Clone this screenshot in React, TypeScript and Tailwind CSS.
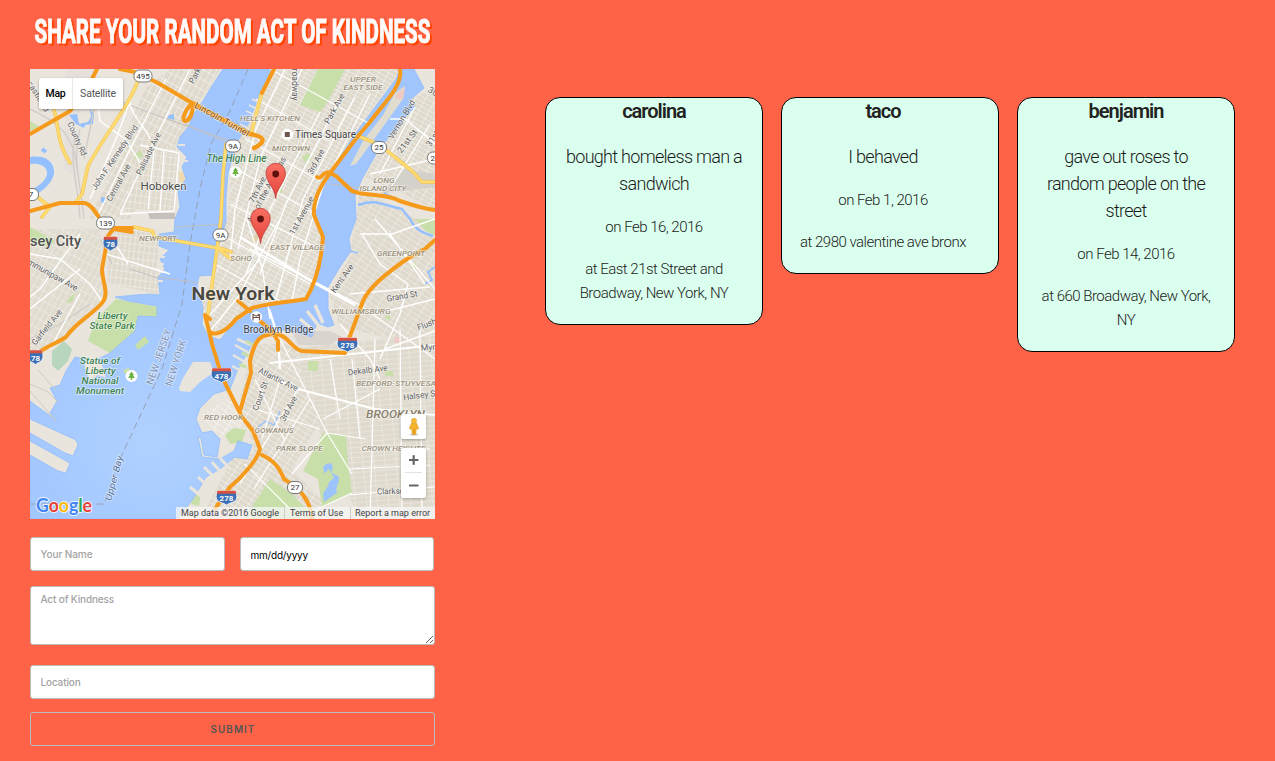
import React from "react";

type Kindness = { name: string; act: string; date: string; place: string };

const acts: Kindness[] = [
  { name: "carolina", act: "bought homeless man a sandwich", date: "on Feb 16, 2016", place: "at East 21st Street and Broadway, New York, NY" },
  { name: "taco", act: "I behaved", date: "on Feb 1, 2016", place: "at 2980 valentine ave bronx" },
  { name: "benjamin", act: "gave out roses to random people on the street", date: "on Feb 14, 2016", place: "at 660 Broadway, New York, NY" },
];

type Label = { t: string; x: number; y: number; s: number; w?: number; r?: number; c?: string; i?: boolean; len?: number };

const AREA = "#9b917c";
const ROAD = "#606060";
const PARK = "#3f8452";

const labels: Label[] = [
  { t: "UPPER", x: 333, y: 13, s: 8, c: AREA, i: true, w: 500, len: 26 },
  { t: "EAST SIDE", x: 333, y: 21, s: 8, c: AREA, i: true, w: 500, len: 39 },
  { t: "HELL'S KITCHEN", x: 240, y: 51.5, s: 8, c: AREA, i: true, w: 500, len: 60 },
  { t: "MIDTOWN", x: 261, y: 82, s: 8, c: AREA, i: true, w: 500, len: 38 },
  { t: "LONG", x: 354, y: 114, s: 8, c: AREA, i: true, w: 500, len: 21 },
  { t: "ISLAND CITY", x: 353, y: 122, s: 8, c: AREA, i: true, w: 500, len: 47 },
  { t: "NEWPORT", x: 128, y: 171.5, s: 8, c: AREA, i: true, w: 500, len: 38 },
  { t: "SOHO", x: 211, y: 191.5, s: 8, c: AREA, i: true, w: 500, len: 22 },
  { t: "EAST VILLAGE", x: 267, y: 181, s: 8, c: AREA, i: true, w: 500, len: 54 },
  { t: "GREENPOINT", x: 371, y: 187, s: 8, c: AREA, i: true, w: 500, len: 48 },
  { t: "WILLIAMSBURG", x: 331, y: 244.5, s: 8, c: AREA, i: true, w: 500, len: 59 },
  { t: "BEDFORD-STUYVESA", x: 366, y: 316.5, s: 8, c: AREA, i: true, w: 500, len: 80 },
  { t: "RED HOOK", x: 193.5, y: 350.5, s: 8, c: AREA, i: true, w: 500, len: 39 },
  { t: "GOWANUS", x: 244, y: 364, s: 8, c: AREA, i: true, w: 500, len: 39 },
  { t: "PARK SLOPE", x: 269.5, y: 382, s: 8, c: AREA, i: true, w: 500, len: 47 },
  { t: "CROWN HEIGHTS", x: 363.5, y: 382, s: 8, c: AREA, i: true, w: 500, len: 64 },
  { t: "BROOKLYN", x: 365.5, y: 349, s: 11, c: "#8a806c", i: true, w: 500, len: 59 },
  { t: "New York", x: 203, y: 231, s: 18, w: 600, c: "#4a4640", len: 83 },
  { t: "sey City", x: 25.5, y: 176.5, s: 14, w: 500, c: "#505050", len: 51 },
  { t: "Hoboken", x: 133.5, y: 121, s: 11.5, w: 400, c: "#4c4c4c", len: 46 },
  { t: "Times Square", x: 295.5, y: 68.5, s: 10.5, w: 400, c: "#444", len: 61 },
  { t: "Brooklyn Bridge", x: 248.5, y: 264, s: 10.5, w: 400, c: "#3c3c3c", len: 70 },
  { t: "The High Line", x: 206.5, y: 93, s: 10, c: PARK, i: true, w: 500, len: 60 },
  { t: "Liberty", x: 82.5, y: 250, s: 9.8, c: PARK, i: true, w: 500, len: 30 },
  { t: "State Park", x: 82, y: 260, s: 9.8, c: PARK, i: true, w: 500, len: 45 },
  { t: "Statue of", x: 70, y: 295, s: 9.8, c: PARK, i: true, w: 500, len: 40 },
  { t: "Liberty", x: 70.5, y: 305, s: 9.8, c: PARK, i: true, w: 500, len: 30 },
  { t: "National", x: 70, y: 315, s: 9.8, c: PARK, i: true, w: 500, len: 37 },
  { t: "Monument", x: 70, y: 325, s: 9.8, c: PARK, i: true, w: 500, len: 48 },
  { t: "County Rd", x: 44.5, y: 71, s: 8.5, r: 66, c: ROAD, len: 36 },
  { t: "castle Rd", x: 6, y: 29, s: 8.5, r: 58, c: ROAD, len: 34 },
  { t: "John F. Kennedy Blvd", x: 87, y: 90, s: 8.5, r: -56, c: ROAD, len: 76 },
  { t: "Central Ave", x: 91, y: 115, s: 8.5, r: -61, c: ROAD, len: 41 },
  { t: "Palisade Ave", x: 121, y: 86, s: 8.5, r: -64, c: ROAD, len: 46 },
  { t: "Park Ave", x: 171, y: 1, s: 8.5, r: -62, c: ROAD, len: 32 },
  { t: "Lincoln Tunnel", x: 190.5, y: 53, s: 9, r: 29, c: "#87500d", w: 400, len: 61 },
  { t: "Broadway", x: 261.5, y: 13, s: 8.5, r: 90, c: ROAD, len: 37 },
  { t: "Park Ave", x: 307, y: 41, s: 8.5, r: -61, c: ROAD, len: 33 },
  { t: "3rd Ave", x: 288.5, y: 94, s: 8.5, r: -62, c: ROAD, len: 27 },
  { t: "7th Ave", x: 230, y: 122, s: 8.5, r: -64, c: ROAD, len: 28 },
  { t: "Ave of the Americas", x: 239, y: 122, s: 8.5, r: -62, c: ROAD, len: 73 },
  { t: "1st Avenue", x: 274, y: 148, s: 8.5, r: -61, c: ROAD, len: 42 },
  { t: "Vernon Blvd", x: 374, y: 52, s: 8.5, r: -59, c: ROAD, len: 44 },
  { t: "21st St", x: 379.5, y: 74, s: 8.5, r: -52, c: ROAD, len: 27 },
  { t: "30th", x: 405, y: 27, s: 8.5, r: 32, c: ROAD, len: 18 },
  { t: "31st", x: 405, y: 71, s: 8.5, r: -58, c: ROAD, len: 17 },
  { t: "Communipaw Ave", x: 17, y: 206, s: 8.5, r: 29, c: ROAD, len: 66 },
  { t: "Garfield Ave", x: 19, y: 260, s: 8.5, r: -51, c: ROAD, len: 43 },
  { t: "Kent Ave", x: 314.5, y: 211, s: 8.5, r: -55, c: ROAD, len: 33 },
  { t: "Grand St", x: 372.5, y: 230, s: 8.5, r: -10, c: ROAD, len: 31 },
  { t: "Flushing", x: 403, y: 256, s: 8.5, r: -21, c: ROAD, len: 31 },
  { t: "Myrtle", x: 403, y: 281, s: 8.5, r: -4, c: ROAD, len: 24 },
  { t: "Dekalb Ave", x: 338, y: 304, s: 8.5, r: -7, c: ROAD, len: 40 },
  { t: "Halsey St", x: 391, y: 329, s: 8.5, r: -8, c: ROAD, len: 35 },
  { t: "Atlantic Ave", x: 247, y: 313, s: 8.5, r: 26, c: ROAD, len: 43 },
  { t: "Court St", x: 233, y: 328, s: 8.5, r: -70, c: ROAD, len: 30 },
  { t: "3rd Ave", x: 261, y: 341, s: 8.5, r: -62, c: ROAD, len: 27 },
  { t: "Clarkson", x: 363, y: 425, s: 8.5, r: -2, c: ROAD, len: 32 },
  { t: "Upper Bay", x: 87, y: 410, s: 9, r: -75, c: "#56749c", i: true, len: 46 },
  { t: "NEW JERSEY", x: 132, y: 289, s: 10, r: -71, c: "#8195b5", len: 58 },
  { t: "NEW YORK", x: 149, y: 295, s: 10, r: -72, c: "#8195b5", len: 48 },
];

function MapLabel({ l }: { l: Label }) {
  return (
    <text
      transform={`translate(${l.x} ${l.y}) rotate(${l.r ?? 0})`}
      fontSize={l.s}
      fontWeight={l.w ?? 400}
      fontStyle={l.i ? "italic" : "normal"}
      fill={l.c}
      stroke="#ffffff"
      strokeOpacity=".55"
      strokeWidth="1.6"
      strokeLinejoin="round"
      paintOrder="stroke"
      textAnchor="middle"
      textLength={l.len}
      lengthAdjust="spacingAndGlyphs"
    >
      {l.t}
    </text>
  );
}

function Shield({ x, y, n }: { x: number; y: number; n: string }) {
  const wide = n.length > 2;
  return (
    <g transform={`translate(${x} ${y})`}>
      <g transform={wide ? "scale(1.400 1)" : "scale(1 1)"}>
        <path d="M-6.500-6.500H6.500C8-1 8 3 4 5 2 6 1 6.500 0 7.500-1 6.500-2 6-4 5-8 3-8-1-6.500-6.500z" fill="#3a6fb5" stroke="#fff" strokeWidth=".7" />
        <path d="M-6.500-6.800H6.500L7-3.800H-7z" fill="#d8503f" />
      </g>
      <text y="3.700" fontSize="8" fontWeight="700" fill="#fff" textAnchor="middle">{n}</text>
    </g>
  );
}

function Route({ x, y, n }: { x: number; y: number; n: string }) {
  const w = n.length > 2 ? 18 : 15;
  return (
    <g transform={`translate(${x} ${y})`}>
      <rect x={-w / 2} y="-6" width={w} height="12" rx="5.5" fill="#fff" stroke="#777" strokeWidth="1" />
      <text y="2.9" fontSize="8" fontWeight="400" fill="#333" textAnchor="middle">{n}</text>
    </g>
  );
}

function Pin({ x, y }: { x: number; y: number }) {
  return (
    <g transform={`translate(${x} ${y})`}>
      <path d="M0 0C-.8-11-9.700-16-9.700-25.500A9.700 9.700 0 0 1 9.700-25.500C9.700-16 .8-11 0 0z" transform="translate(0 -1)" fill="url(#pin)" stroke="#c03a31" strokeWidth=".8" />
      <circle cy="-25.500" r="3.400" fill="#5e1210" />
    </g>
  );
}

function TreeBadge({ x, y }: { x: number; y: number }) {
  return (
    <g transform={`translate(${x} ${y})`}>
      <circle r="6" fill="#fff" />
      <path d="M0-4.500L2.500-1H1.500L3.300 2H.7V4H-.7V2H-3.300L-1.500-1H-2.500z" fill="#6ab344" />
    </g>
  );
}

const MANHATTAN = "M243 0H372L345 35 300 100 283 140 294 170 283 222 225 240 178 268 172 235 185 200 197 150 205 75z";

function CityMap() {
  return (
    <svg width="405" height="450" viewBox="0 0 405 450" className="block" fontFamily="Roboto, sans-serif">
      <defs>
        <radialGradient id="bay" gradientUnits="userSpaceOnUse" cx="120" cy="370" r="160">
          <stop offset="0" stopColor="#b0d1ff" />
          <stop offset="1" stopColor="#a0c5ff" />
        </radialGradient>
        <linearGradient id="pin" x1="0" y1="0" x2="0" y2="1">
          <stop offset="0" stopColor="#fb7064" />
          <stop offset="1" stopColor="#e2443b" />
        </linearGradient>
        <pattern id="gridNY" width="9" height="4.500" patternUnits="userSpaceOnUse" patternTransform="rotate(29)">
          <path d="M0 0H9M0 0V4.500" stroke="#fff" strokeWidth=".8" />
        </pattern>
        <pattern id="gridJC" width="5.500" height="9" patternUnits="userSpaceOnUse" patternTransform="rotate(28)">
          <path d="M0 0H5.500M0 0V9" stroke="#fff" strokeWidth=".8" />
        </pattern>
        <pattern id="gridH" width="5" height="7" patternUnits="userSpaceOnUse" patternTransform="rotate(7)">
          <path d="M0 0H5M0 0V7" stroke="#fff" strokeWidth=".7" />
        </pattern>
        <pattern id="gridBK" width="11" height="5" patternUnits="userSpaceOnUse" patternTransform="rotate(-5)">
          <path d="M0 0H11M0 0V5" stroke="#fff" strokeWidth=".7" />
        </pattern>
        <pattern id="gridPS" width="10" height="5" patternUnits="userSpaceOnUse" patternTransform="rotate(33)">
          <path d="M0 0H10M0 0V5" stroke="#fff" strokeWidth=".8" />
        </pattern>
      </defs>

      <rect width="405" height="450" fill="#e9e5dc" />

      {/* city blocks */}
      <g>
        <path d={MANHATTAN} fill="#dfdacd" />
        <path d={MANHATTAN} fill="url(#gridNY)" />
        <path d="M115 20L140 0H190L150 68 100 150H60z" fill="#dfdacd" />
        <path d="M115 20L140 0H190L150 68 100 150H60z" fill="url(#gridJC)" />
        <path d="M110 70L150 80 145 142 95 140z" fill="#dfdacd" />
        <path d="M110 70L150 80 145 142 95 140z" fill="url(#gridH)" />
        <path d="M78 158L128 162 128 225 78 215z" fill="#dfdacd" />
        <path d="M78 158L128 162 128 225 78 215z" fill="url(#gridH)" />
        <path d="M0 160L70 160 74 230 30 275 0 285z" fill="#e1dcd0" />
        <path d="M0 160L70 160 74 230 30 275 0 285z" fill="url(#gridJC)" opacity=".75" />
        <path d="M330 120L405 160V280L310 258 300 225 320 185z" fill="#dfdacd" />
        <path d="M330 120L405 160V280L310 258 300 225 320 185z" fill="url(#gridPS)" opacity=".8" />
        <path d="M240 280L405 265V450H330L270 320z" fill="#dfdacd" />
        <path d="M240 280L405 265V450H330L270 320z" fill="url(#gridBK)" opacity=".8" />
        <path d="M222 275H262L290 352 262 400 310 450H170L205 385 225 385 210 330z" fill="#dfdacd" />
        <path d="M222 275H262L290 352 262 400 310 450H170L205 385 225 385 210 330z" fill="url(#gridPS)" />
        <path d="M380 30L405 20V140L335 108z" fill="#dfdacd" />
        <path d="M380 30L405 20V140L335 108z" fill="url(#gridNY)" opacity=".9" />
        <path d="M172 345L205 325 218 345 200 372 183 362z" fill="url(#gridPS)" />
      </g>
      <path d="M36 0L66 0 45 58 50 110 34 100z" fill="#e6e0dc" />
      <path d="M118 144H145V150H120z" fill="#c4c1bd" />
      <path d="M350 125L375 100 405 105V118L370 122z" fill="#d4d0ca" />
      <path d="M262 262L282 262 300 262 312 268 300 276 268 276z" fill="#d9d4ce" />

      {/* parks */}
      <g fill="#c8dfa9">
        <path d="M288 0H315L297 34 290 43 270 36z" />
        <path d="M86 230L128 238 127 248 108 247 105 262 80 284 58 272 66 250z" />
        <path d="M0 158L25 172 18 178 0 172z" /><path d="M0 52L10 58 0 62z" />
        <path d="M166 45L174 44 168 50 163 51z" />
        <path d="M293 364L316 366 318 396 322 424 292 438 288 410 273 402z" />
        <path d="M240 410L262 425 282 446 284 450H214z" />
        <path d="M385 150H405V166L396 162z" />
        <path d="M104 86l7-5 2 7-8 2zM272 88l6-4 4 6-7 3z" />
        <path d="M245 122l5-6 3 6-5 5zM278 292h10v10h-10zM380 198l6-4 1 6zM354 248l6-2v6zM355 302h8v5h-8z" />
        <path d="M163 423l8 2-2 12-8-2zM195 366l8-7 13 2-4 12-12 2zM328 106l8-3-4 6zM40 228l5-4-2 8-7 3z" />
      </g>
      <path d="M221 168l8-4 2 6-8 5z" fill="#ddd3ad" /><path d="M148 104l8-3 2 11-8 2z" fill="#eed9b0" />
      <path d="M365 268h6v6h-6z" fill="#efc9c5" />

      {/* water */}
      <path
        fill="url(#bay)"
        stroke="#8fbcfb"
        strokeWidth=".8"
        d="M193 0L180 20 173 32 165 43 158 58 150 68 147 78 157 88 152 98 156 110 148 122 150 138 145 150 144 163 129 165 129 177 139 181 130 190 135 200 128 208 130 226 120 225 105 226 85 228 98 232 127 237 127 248 108 247 105 262 80 284 66 291 60 300 56 290 45 288 36 302 30 316 20 319 27 332 20 344 27 352 0 332V350L46 371 48 376 43 387 35 384 0 364V372L40 394 36 404 28 402 0 386V450H148L163 430 176 408 190 400 205 388 217 390 222 376 208 372 204 382 190 390 172 388 168 368 171 369 174 386 187 388 190 370 182 362 172 364 166 350 170 339 184 325 200 320 208 300 215 288 224 272 240 260 262 262 282 268 287 254 298 258 304 256 298 240 298 218 310 198 321 182 319 170 326 150 325 127 332 110 349 80 365 61 373 50 385 38 379 32 394 19 384 0H370L366 10 348 34 325 65 302 100 286 128 282 140 294 165 292 185 284 220 277 231 236 235 224 241 201 257 190 271 178 267 172 255 173 238 167 218 169 207 184 206 188 178 196 153 196 130 198 105 206 75 220 52 229 25 243 0z"
      />
      <path d="M105 276l10-9 4 6-11 8z" fill="#c8dfa9" />
      <path d="M54 293L64 288 72 296 76 309 68 306 60 312 56 302z" fill="#e9e5dc" />
      <path d="M22 282L34 272 42 280 38 292 28 302 22 296z" fill="#b7d6bd" />
      <path d="M93 301l6-2 1 4-5 2z" fill="#c8dfa9" />
      <path d="M163 293L180 293 184 303 170 313 160 323 150 322 149 319 153 309z" fill="#e9e5dc" />
      <path d="M375 17L373 30 350 62 326 95 320 97 333 72 353 46 365 24z" fill="#e0ddd0" />
      <path d="M375 19L373 30 365 30 367 24z" fill="#efc9c5" />
      <path d="M205 276l14 8M203 286l12 7M202 297l11 6M207 270l14 6" stroke="#e9e5dc" strokeWidth="2.500" />
      <path d="M216 272l7 4M212 284l7 3M209 295l7 3" stroke="#c8dfa9" strokeWidth="3" />
      <path d="M277 242l12 15M285 236l8 18M270 250l14 12" stroke="#e9e5dc" strokeWidth="3.500" />
      <path d="M174 398l14 14M182 393l12 14M190 389l11 12M168 408l13 12M160 418l12 10" stroke="#e9e5dc" strokeWidth="3" />
      <path d="M222 30l8 4M219 36l8 4M216 42l9 4M213 49l8 4M210 55l8 4M207 61l8 4" stroke="#e9e5dc" strokeWidth="1.700" />
      <path d="M128 188h7M128 195h6M128 203h8M128 212h5M144 156h-6M148 76h7M150 92h8M148 116h8" stroke="#e9e5dc" strokeWidth="2" />
      <path d="M0 88C15 86 25 92 24 105 22 114 12 124 0 128V122C10 116 18 110 17 103 16 96 8 94 0 95zM39 46l8-1 2 10 9-2 3-5-1-8 4 5-1 10-8 1-1 3-8-4zM139 46l5-1v6l-7-2zM71 128l5 1-2 6-3-2z" fill="#94c0ff" />
      <path d="M293 398c6-7 12-3 9 3s8 3 7 9-5 14-1 13l-14 10-1-8 6-10-4-7z" fill="#9dc3fc" />
      <path d="M299 400l5 9-7 6-4-9z" fill="#c8dfa9" />
      <g fill="none" stroke="#94c0ff" strokeWidth="2.500">
        <path d="M328 136C345 130 350 135 372 140L380 150C386 162 394 164 403 167" />
        <path d="M405 198l-7 5 4 8-7 4M354 124l22 10M320 182l8 2" strokeWidth="1.800" />
        <path d="M228 358l8-6 8 4 6-14" strokeWidth="1.300" />
        <path d="M12 80l4 3" strokeWidth="4" />
      </g>
      <path d="M8 301l18 20M0 315l18 8 10 10M0 322l26 30" stroke="#cfcac2" strokeWidth="1" fill="none" />

      {/* boundary lines */}
      <path d="M218 0L200 42 181 75 170 120 160 175 152 235 132 300 90 390 74 435H0" fill="none" stroke="#94a0b2" strokeWidth="1" strokeDasharray="7 4" />
      <path d="M128 208L168 214M155 55L200 75M60 20L120 44 200 72M100 200L128 209M145 158L196 155M300 115L335 120" stroke="#c3c0c0" strokeWidth="1" fill="none" />

      {/* rail yards */}
      <g stroke="#cfcbc6" fill="none" strokeWidth="1.300">
        <path d="M50 60C42 90 50 110 54 150M46 62C38 96 48 110 50 150M66 30L54 90M0 40C20 50 44 60 47 100M20 10L62 28M70 170L82 195M60 235L30 255 0 270" />
      </g>

      {/* streets */}
      <g stroke="#ffffff" fill="none" strokeWidth="1.400" strokeLinejoin="round">
        <path d="M66 20L70 52 95 70 108 90 112 100M100 30C98 45 118 60 120 70M112 0L86 70 60 130M136 10L100 80 66 150M160 0L120 80 90 145M110 76L149 84 144 142M124 82L118 140M134 82L130 142M90 145L144 142" />
        <path d="M0 185L30 190 60 215 74 235M76 185L140 205M82 170L98 195M50 165L10 220 0 228M0 240L50 200M20 280L50 225" />
        <path d="M255 0L226 60 205 140 200 190M272 0L230 90 208 180M290 43L240 140 216 205M310 30L256 135 230 205M325 28L273 130 246 230M340 25L292 120 270 190 262 232" />
        <path d="M226 30L300 72M240 0L340 55M215 70L290 112M206 100L285 145M200 135L290 180M190 165L280 215M185 195L250 232" strokeWidth="1.200" />
        <path d="M217 150L232 198 240 250M180 262L208 228 250 150M176 250L230 190M220 180L330 236 405 290" />
        <path d="M210 168L283 213 325 236" strokeWidth="2.600" />
        <path d="M239 240L248 268 250 300" strokeWidth="2.400" />
        <path d="M332 165L350 195 378 215 370 245 350 290M345 150L405 220M330 165L362 165 405 150M320 225L400 218M310 255L340 290 350 310M345 245L405 230M355 280L405 262M360 165L395 215" />
        <path d="M240 294L405 276M228 302L268 320 345 340 405 346" strokeWidth="2" />
        <path d="M250 270L297 364 322 405M297 364L336 370M345 270L340 450M370 260L372 450M390 260L392 450M300 290L310 350M322 290L330 370M297 364L262 405M293 350L350 320M320 426L405 418M320 400L400 396M322 424L270 448M330 380H400" strokeWidth="1.200" />
        <path d="M225 310L255 372M268 320L210 415M280 330L224 420M250 310L232 370M225 340L290 360M215 395L260 440" strokeWidth="1.200" />
        <path d="M372 47L405 75M385 38L350 105M400 55L360 120M405 90L340 105M360 50L375 50 400 70" />
      </g>

      {/* secondary highways */}
      <g fill="none" strokeLinejoin="round" strokeLinecap="round">
        <path d="M109 8C104 30 72 70 58 97L52 125 46 133M0 122L20 138 12 148M20 28C30 50 24 70 40 94M232 23L221 65M196 75L193 105 191 150 187 180 178 245M104 158L122 162 125 168 193 180 201 183M189 180l12 10M328 67L350 76 382 102 392 113H405" stroke="#f0c255" strokeWidth="3.600" />
        <path d="M109 8C104 30 72 70 58 97L52 125 46 133M0 122L20 138 12 148M20 28C30 50 24 70 40 94M232 23L221 65M196 75L193 105 191 150 187 180 178 245M104 158L122 162 125 168 193 180 201 183M189 180l12 10M328 67L350 76 382 102 392 113H405" stroke="#ffdc70" strokeWidth="2.400" />
      </g>

      {/* primary highways */}
      <g fill="none" stroke="#f59a1b" strokeWidth="4" strokeLinejoin="round" strokeLinecap="round">
        <path d="M0 65L40 42 60 14 67 0M90 0L105 3 128 14 162 34C152 45 151 55 158 51 163 46 163 38 162 34L195 52" />
        <path d="M162 34L220 65C238 68 234 74 224 79" strokeWidth="4.600" />
        <path d="M0 142L30 134H55C62 136 66 144 70 150" />
        <path d="M102 159H84L78 167 72 200C72 213 80 225 72 234 62 246 46 253 36 268 26 275 12 278 0 291" />
        <path d="M84 160L102 163" />
        <path d="M244 0L232 24" />
        <path d="M370 0C373 18 352 36 340 53L328 67 300 104C290 118 283 130 284 146L293 168C291 195 285 215 276 230 260 233 240 234 222 239L206 250C196 263 184 268 179 262L175 246 180 250" />
        <path d="M179 262L182 275 192 308 212 348 223 362 230 380C227 392 210 410 200 418L185 440M210 342L221 304 220 292C225 270 230 265 246 265 258 266 262 280 272 282L315 284 317 275 333 232C340 216 362 200 380 188L395 180 405 171" />
        <path d="M208 232L220 242M230 252L242 262 248 272V281M300 104C292 101 292 112 287 108M300 104L306 107 322 122C340 128 355 124 370 132 385 137 395 140 405 141" />
        <path d="M232 386C245 392 250 400 254 410 270 420 280 430 282 450" />
      </g>

      {labels.map((l) => <MapLabel key={`${l.t}-${l.x}-${l.y}`} l={l} />)}

      <Route x={113} y={7} n="495" /><Route x={203} y={77} n="9A" /><Route x={190.5} y={166} n="9A" />
      <Route x={349} y={78.5} n="25" /><Route x={75.5} y={154} n="139" /><Route x={265} y={418.5} n="27" />
      <Route x={1} y={125.5} n="7" /><Route x={405} y={89} n="25" />
      <Shield x={80.5} y={174.5} n="78" /><Shield x={5.5} y={288} n="78" /><Shield x={191.5} y={306} n="478" />
      <Shield x={317.5} y={275.5} n="278" /><Shield x={196.5} y={428.5} n="278" />
      <TreeBadge x={205.5} y={103} /><TreeBadge x={101.5} y={307} />
      <circle cx="257.300" cy="65.500" r="5.800" fill="#fff" /><rect x="254.800" y="63" width="5" height="5" fill="#71564d" />
      <circle cx="226.300" cy="248" r="5.800" fill="#fff" />
      <path d="M223 245v6.500M229.500 245v6.500M223 248.500h6.500M223 245q3.200 4 6.500 0" fill="none" stroke="#71564d" strokeWidth="1.200" />
      <Pin x={245.7} y={130.5} /><Pin x={230.5} y={175.5} />
    </svg>
  );
}

function Pegman() {
  return (
    <svg width="14" height="20" viewBox="0 0 14 20">
      <ellipse cx="7" cy="17.500" rx="4.500" ry="1.300" fill="#d8d8d8" />
      <path d="M4.200 6.500h5.600l1.900 5-1.400.8-.9-1.700-.6 7H5.200L4.600 10.600l-.9 1.700-1.400-.8z" fill="#f5b32c" stroke="#d9931d" strokeWidth=".5" />
      <circle cx="7" cy="3.900" r="2.600" fill="#f8bd35" stroke="#d9931d" strokeWidth=".5" />
      <path d="M7 12v5.500" stroke="#c97d12" strokeWidth=".8" />
    </svg>
  );
}

function GoogleMark() {
  const letters: [string, string][] = [["G", "#4285f4"], ["o", "#ea4335"], ["o", "#fbbc05"], ["g", "#4285f4"], ["l", "#34a853"], ["e", "#ea4335"]];
  return (
    <svg width="62" height="26" viewBox="0 0 62 26" className="absolute bottom-0 left-[4px]">
      <text x="2" y="19" fontSize="19" fontWeight="700" fontFamily="Lato, sans-serif" textLength="56" lengthAdjust="spacingAndGlyphs" stroke="#fff" strokeWidth="2" strokeOpacity=".8" paintOrder="stroke">
        {letters.map(([ch, color], i) => <tspan key={i} fill={color}>{ch}</tspan>)}
      </text>
    </svg>
  );
}

const field = "block rounded-[3px] border border-[#bbb] bg-white px-[9.5px] text-[10px] text-black outline-none placeholder:text-[#a3a3a3] placeholder:font-medium";

export default function App() {
  return (
    <main className="flex h-[761px] w-full items-start overflow-hidden bg-[#ff6347] font-['Roboto',sans-serif] text-[#222]">
      <section className="ml-[30px] w-[405px] shrink-0">
        <h1 className="h-[69px] pt-[11px] text-[33.5px] font-bold">
          <svg width="405" height="44" viewBox="0 0 405 44" className="overflow-visible [filter:drop-shadow(2px_2px_0.5px_#ff4500)]">
            <text x="4.500" y="32" textLength="396" lengthAdjust="spacingAndGlyphs" fill="#fffafa" stroke="#fffafa" strokeWidth="1.100">
              SHARE YOUR RANDOM ACT OF KINDNESS
            </text>
          </svg>
        </h1>
        <div className="relative h-[450px] overflow-hidden">
          <CityMap />
          <div className="absolute left-[9px] top-[9px] flex h-[31px] w-[84px] items-center rounded-[2px] bg-white text-[10.5px] shadow-[0_1px_3px_rgba(0,0,0,.3)]">
            <span className="flex h-full w-[34px] items-center justify-center border-r border-[#e8e8e8] font-medium tracking-[-0.2px] text-black">Map</span>
            <span className="flex-1 text-center tracking-[-0.2px] text-[#565656]">Satellite</span>
          </div>
          <div className="absolute right-[9px] top-[345px] flex size-[25px] items-center justify-center rounded-[2px] bg-white shadow-[0_1px_3px_rgba(0,0,0,.3)]"><Pegman /></div>
          <div className="absolute right-[9px] top-[379px] flex h-[50px] w-[25px] flex-col items-center rounded-[2px] bg-white shadow-[0_1px_3px_rgba(0,0,0,.3)]">
            <svg width="25" height="50" viewBox="0 0 25 50"><path d="M8 12h9.500M12.700 7.300v9.500M8 37.500h9.500" stroke="#666" strokeWidth="2.200" /><path d="M4 24.500h17" stroke="#e2e2e2" /></svg>
          </div>
          <GoogleMark />
          <div className="absolute bottom-0 right-0 flex h-[12px] w-[259px] items-center bg-[#f5f5f5]/75 text-[9px] leading-[12px] text-[#444]">
            <span className="w-[109px] whitespace-nowrap border-r border-[#ccc] pl-[5px]">Map data ©2016 Google</span>
            <span className="w-[66px] whitespace-nowrap border-r border-[#ccc] pl-[5px]">Terms of Use</span>
            <span className="whitespace-nowrap pl-[4px]">Report a map error</span>
          </div>
        </div>
        <form className="pt-[18px] font-['Inter',sans-serif]" onSubmit={(e) => e.preventDefault()}>
          <div className="flex gap-[15px]">
            <input className={`${field} h-[34px] w-[195px] tracking-[-0.08px]`} placeholder="Your Name" />
            <input className={`${field} h-[34px] w-[194px] pt-[1px] tracking-[-0.2px]`} defaultValue="mm/dd/yyyy" />
          </div>
          <textarea className={`${field} mt-[15px] h-[59px] w-[405px] resize pt-[5px] tracking-[-0.15px]`} placeholder="Act of Kindness" />
          <input className={`${field} mt-[20px] h-[34px] w-[405px] tracking-[-0.15px]`} placeholder="Location" />
          <button className="mt-[13px] flex h-[34px] w-full items-center justify-center rounded-[3px] border border-[#bbb] pl-px pt-[3px] text-[9.8px] font-semibold tracking-[1.1px] text-[#555]">SUBMIT</button>
        </form>
      </section>
      <section className="ml-[110px] mt-[97px] flex items-start gap-[18px]">
        {acts.map((a) => (
          <article key={a.name} className="w-[218px] rounded-[15px] border border-black bg-[#dbffee] px-[18px] pb-[19px] text-[#1a1a1a]">
            <div className="flex w-fit flex-col gap-[18px] text-center text-[15px] font-light leading-[24px] tracking-[-0.5px]">
              <h2 className="text-[20px] font-semibold leading-[27px] tracking-[-1px] text-[#222]">{a.name}</h2>
              <p className="text-[18px] leading-[27px] tracking-[-0.7px]">{a.act}</p>
              <p>{a.date}</p>
              <p>{a.place}</p>
            </div>
          </article>
        ))}
      </section>
    </main>
  );
}
